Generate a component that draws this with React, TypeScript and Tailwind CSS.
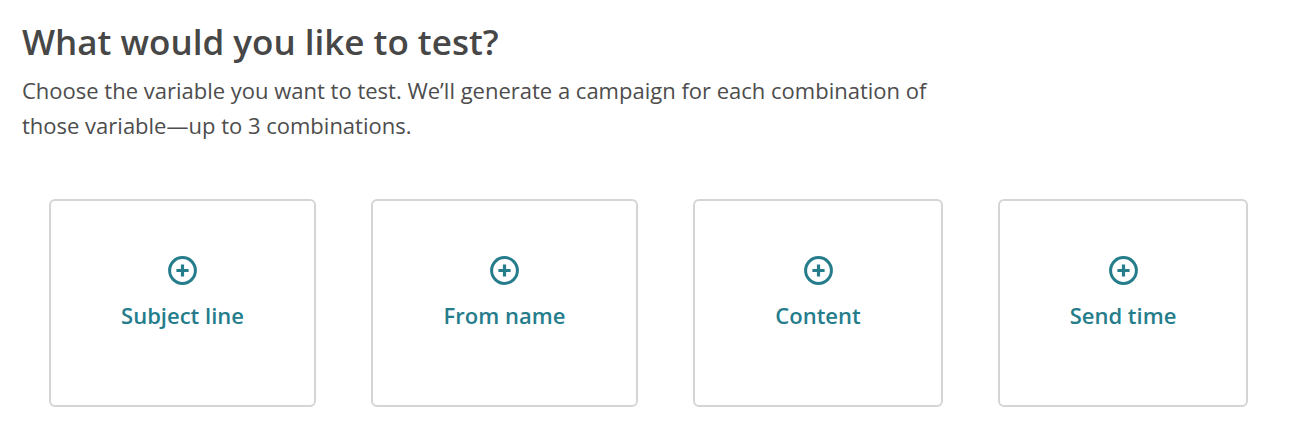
import React from "react";

const PlusCircle = () => (
  <svg width="29" height="29" viewBox="0 0 29 29" fill="none">
    <circle cx="14.5" cy="14.5" r="12.9" stroke="currentColor" strokeWidth="3" />
    <path d="M14.5 8.4v12.2M8.4 14.5h12.2" stroke="currentColor" strokeWidth="3.2" />
  </svg>
);

const cards = [
  { label: "Subject line", w: "w-[267px]" },
  { label: "From name", w: "w-[267px]" },
  { label: "Content", w: "w-[250px]" },
  { label: "Send time", w: "w-[250px]" },
];

export default function App() {
  return (
    <div
      className="w-[1290px] h-[448px] bg-white pl-[22px] pt-[22px]"
      style={{ fontFamily: '"Open Sans", sans-serif' }}
    >
      <h1 className="text-[35px] leading-[40px] font-semibold text-[#474747]">
        What would you like to test?
      </h1>
      <p className="mt-[11px] w-[940px] text-[22px] leading-[35px] text-[#4d4d4d]">
        Choose the variable you want to test. We’ll generate a campaign for each combination of
        those variable—up to 3 combinations.
      </p>
      <div className="mt-[56px] ml-[27px] flex gap-[55px]">
        {cards.map((c) => (
          <div
            key={c.label}
            className={`${c.w} h-[208px] rounded-[6px] border-2 border-[#d5d5d5] flex flex-col items-center pt-[55px] text-[#257d8c] cursor-pointer`}
          >
            <PlusCircle />
            <div className="mt-[16px] text-[22px] leading-[28px] font-semibold">{c.label}</div>
          </div>
        ))}
      </div>
    </div>
  );
}
